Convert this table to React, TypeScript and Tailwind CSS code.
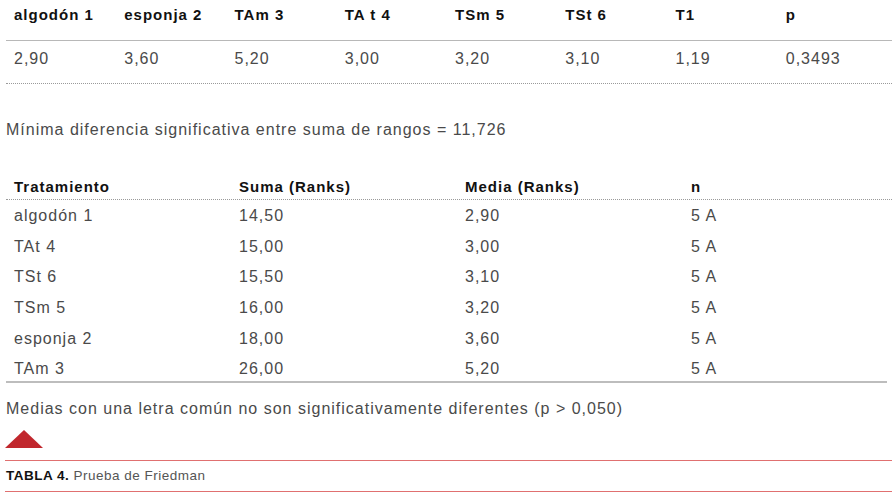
const font = { fontFamily: '"Liberation Sans", Arial, sans-serif' };

const topHeaders = ['algodón 1', 'esponja 2', 'TAm 3', 'TA t 4', 'TSm 5', 'TSt 6', 'T1', 'p'];
const topValues = ['2,90', '3,60', '5,20', '3,00', '3,20', '3,10', '1,19', '0,3493'];

const ranks = [
  { name: 'algodón 1', suma: '14,50', media: '2,90', n: '5 A' },
  { name: 'TAt 4', suma: '15,00', media: '3,00', n: '5 A' },
  { name: 'TSt 6', suma: '15,50', media: '3,10', n: '5 A' },
  { name: 'TSm 5', suma: '16,00', media: '3,20', n: '5 A' },
  { name: 'esponja 2', suma: '18,00', media: '3,60', n: '5 A' },
  { name: 'TAm 3', suma: '26,00', media: '5,20', n: '5 A' },
];

const rankCols = 'grid grid-cols-[225px_226px_226px_1fr]';

export default function App() {
  return (
    <div className="w-[892px] h-[498px] bg-white overflow-hidden text-[#4a4a4a] tracking-[1px]" style={font}>
      <div className="ml-[6px]">
        <div className="border-b border-[#b8b8b8]">
          <div className="grid grid-cols-8 w-[882px] h-[40px] items-center pb-[10px]">
            {topHeaders.map((h) => (
              <div key={h} className="pl-2 text-[15px] font-bold text-[#111]">{h}</div>
            ))}
          </div>
        </div>
        <div className="border-b border-dotted border-[#9a9a9a]">
          <div className="grid grid-cols-8 w-[882px] h-[42px] items-center pb-[7px]">
            {topValues.map((v, i) => (
              <div key={i} className="pl-2 text-[16px]">{v}</div>
            ))}
          </div>
        </div>
      </div>

      <p className="mt-[36px] pl-[6px] text-[16px] leading-[20px]">
        Mínima diferencia significativa entre suma de rangos = 11,726
      </p>

      <div className="ml-[6px] mt-[38px]">
        <div className={`${rankCols} h-[22px] items-start leading-[18px] border-b border-dotted border-[#9a9a9a]`}>
          <div className="pl-2 text-[15px] font-bold text-[#111]">Tratamiento</div>
          <div className="pl-2 text-[15px] font-bold text-[#111]">Suma (Ranks)</div>
          <div className="pl-2 text-[15px] font-bold text-[#111]">Media (Ranks)</div>
          <div className="pl-2 text-[15px] font-bold text-[#111]">n</div>
        </div>
        <div className="h-[183px] border-b-2 border-[#bdbdbd] mr-[5px] pt-[1px]">
          {ranks.map((r) => (
            <div key={r.name} className={`${rankCols} h-[30.6px] items-center text-[16px]`}>
              <div className="pl-2">{r.name}</div>
              <div className="pl-2">{r.suma}</div>
              <div className="pl-2">{r.media}</div>
              <div className="pl-2">{r.n}</div>
            </div>
          ))}
        </div>
      </div>

      <p className="mt-[16px] pl-[6px] text-[16px] leading-[20px]">
        Medias con una letra común no son significativamente diferentes (p &gt; 0,050)
      </p>

      <div className="mt-[11px] ml-[5px] w-0 h-0 border-l-[19px] border-r-[19px] border-b-[18px] border-l-transparent border-r-transparent border-b-[#c1272d]" />

      <div className="mt-[12px] ml-[5px] border-t border-b border-[#e07070] h-[32px] flex items-center pl-[1px]">
        <span className="text-[13.5px] leading-none text-[#555] tracking-[0.5px]">
          <span className="font-bold text-[#111]">TABLA 4.</span> Prueba de Friedman
        </span>
      </div>
    </div>
  );
}
